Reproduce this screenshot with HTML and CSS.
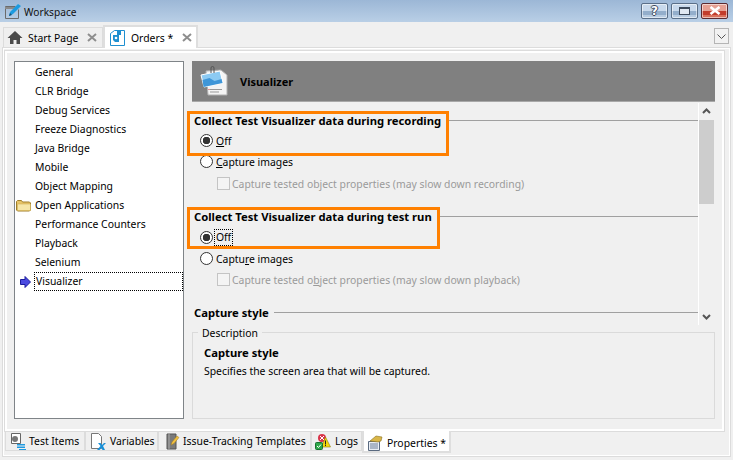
FILE: index.html
```html
<!DOCTYPE html>
<html lang="en">
<head>
<meta charset="utf-8">
<title>Workspace</title>
<link rel="stylesheet" href="styles.css">
</head>
<body>
<div class="window">
  <header class="titlebar">
    <svg class="title-icon" width="17" height="17" viewBox="0 0 17 17"><path d="M1.500 3.500h10M1.500 3.500v12h13v-9" fill="none" stroke="#6b6b6b"/><path d="M1 4h11v2H1z" fill="#8a8a8a"/><path d="M5 13l1-4 8-8 3 2-8 8z" fill="#1c9be0"/><path d="M5 13l1-3 2 2z" fill="#13507a"/></svg>
    <span class="title-text">Workspace</span>
    <div class="win-buttons">
      <div class="win-btn"><span class="help-mark">?</span></div>
      <div class="win-btn"><span class="max-mark"></span></div>
      <div class="win-btn close"><svg width="12" height="9" viewBox="0 0 12 9"><path d="M1.500 1l9 7M10.500 1l-9 7" stroke="#fff" stroke-width="2.600" fill="none"/></svg></div>
    </div>
  </header>

  <nav class="tabstrip">
    <div class="tab">
      <svg width="16" height="15" viewBox="0 0 16 15"><path d="M8 1L0.500 8H3v6h3.500v-4h3v4H13V8h2.500z" fill="#4b4b4b"/></svg>
      <span class="tab-label">Start Page</span>
      <svg class="tab-x" width="10" height="9" viewBox="0 0 10 9"><path d="M1 1l8 7M9 1l-8 7" stroke="#8e8e8e" stroke-width="2" fill="none"/></svg>
    </div>
    <div class="tab active">
      <svg width="15" height="16" viewBox="0 0 15 16"><path d="M4.500.5h10v15h-14v-12z" fill="#fff" stroke="#1e8fd0"/><path d="M3 5h6v7H5l-2-2z" fill="#1e8fd0"/><path d="M7 1h4v4H7z" fill="#1e8fd0"/><circle cx="6" cy="8" r="1.300" fill="#fff"/></svg>
      <span class="tab-label">Orders *</span>
      <svg class="tab-x" width="10" height="9" viewBox="0 0 10 9"><path d="M1 1l8 7M9 1l-8 7" stroke="#8e8e8e" stroke-width="2" fill="none"/></svg>
    </div>
    <div class="tab-menu"><svg width="9" height="5" viewBox="0 0 9 5"><path d="M.5.500l4 4 4-4" stroke="#555" fill="none"/></svg></div>
  </nav>

  <div class="outer-frame">
    <div class="inner-frame">
      <aside class="tree">
        <div class="tree-row">General</div>
        <div class="tree-row">CLR Bridge</div>
        <div class="tree-row">Debug Services</div>
        <div class="tree-row">Freeze Diagnostics</div>
        <div class="tree-row">Java Bridge</div>
        <div class="tree-row">Mobile</div>
        <div class="tree-row">Object Mapping</div>
        <div class="tree-row">
          <svg class="tree-icon" width="16" height="13" viewBox="0 0 16 13"><path d="M.5 11V2.500l1-1h4l1 1.500h7l1 1v7l-1 1h-12z" fill="#e6c469" stroke="#a07f2c"/><path d="M1.500 5h13v6.500h-13z" fill="#f6e6a8" stroke="#c9a648" stroke-width=".5"/></svg>
          Open Applications
        </div>
        <div class="tree-row">Performance Counters</div>
        <div class="tree-row">Playback</div>
        <div class="tree-row">Selenium</div>
        <div class="tree-row selected">
          <svg class="tree-icon arrow" width="11" height="12" viewBox="0 0 11 12"><path d="M.5 3.500h4.500V.5L10.500 6 5 11.500V8.500H.5z" fill="#4a4ae0" stroke="#1c1c9c"/></svg>
          <span class="focus-box">Visualizer</span>
        </div>
      </aside>

      <main class="panel">
        <div class="panel-head">
          <svg width="30" height="32" viewBox="0 0 30 32"><path d="M7 6l15-1 6 5v20H9z" fill="#f4f4f4" stroke="#b0b0b0"/><path d="M2 10l19-4 3 12-19 4z" fill="#8ccaf2" stroke="#fff"/><path d="M3.500 15l7-2 5 3 7-2 1 4-19 4z" fill="#3f96d8"/><path d="M12 8V3a1.500 1.500 0 0 1 3 0v5" fill="none" stroke="#555"/><path d="M11 24.500h12M11 27h9" stroke="#999"/><path d="M9.500 24h1v1h-1z" fill="#d33"/></svg>
          <span class="panel-title">Visualizer</span>
        </div>

        <div class="scroll-wrap">
          <div class="scroll-content">
            <div class="section-head first"><b>Collect Test Visualizer data during recording</b><i class="rule"></i></div>
            <div class="opt"><span class="radio on"></span><span class="opt-text"><u>O</u>ff</span></div>
            <div class="opt"><span class="radio"></span><span class="opt-text"><u>C</u>apture images</span></div>
            <div class="opt sub"><span class="check"></span><span class="opt-text dim">Capture tested object properties (may slow down recording)</span></div>

            <div class="section-head second"><b>Collect Test Visualizer data during test run</b><i class="rule"></i></div>
            <div class="opt"><span class="radio on"></span><span class="opt-text dotted">Off</span></div>
            <div class="opt"><span class="radio"></span><span class="opt-text">Captu<u>r</u>e images</span></div>
            <div class="opt sub"><span class="check"></span><span class="opt-text dim">Capture tested o<u>b</u>ject properties (may slow down playback)</span></div>

            <div class="section-head third"><b>Capture style</b><i class="rule"></i></div>
          </div>
          <div class="scrollbar">
            <svg width="9" height="6" viewBox="0 0 9 6"><path d="M1 5l3.500-3.500L8 5" stroke="#555" stroke-width="2" fill="none"/></svg>
            <div class="track"><div class="thumb"></div></div>
            <svg width="9" height="6" viewBox="0 0 9 6"><path d="M1 1l3.500 3.500L8 1" stroke="#555" stroke-width="2" fill="none"/></svg>
          </div>
        </div>

        <section class="desc">
          <span class="desc-legend">Description</span>
          <h3 class="desc-title">Capture style</h3>
          <p class="desc-text">Specifies the screen area that will be captured.</p>
        </section>
      </main>
    </div>

    <div class="bottom-tabs">
      <div class="btab">
        <svg width="17" height="17" viewBox="0 0 17 17"><path d="M2.500.5h9v10h-9z" fill="#fff" stroke="#666"/><circle cx="6" cy="6" r="3" fill="#777"/><path d="M8 11h8v1.500H8zM8 13.500h8V15H8zM10 16h7v1h-7z" fill="#1f9ae0"/></svg>
        <span>Test Items</span>
      </div>
      <div class="btab">
        <svg width="16" height="17" viewBox="0 0 16 17"><path d="M1.500.5h7l3 3v12h-10z" fill="#fff" stroke="#777"/><path d="M8 10h2.500l1.500 2 2-2H16l-3 3 2 4h-2.500L11.500 15l-2 2H7l3.500-4z" fill="#1890d8"/></svg>
        <span>Variables</span>
      </div>
      <div class="btab">
        <svg width="14" height="17" viewBox="0 0 14 17"><path d="M1 1h9v15H1z" fill="#7a7a7a" stroke="#555"/><path d="M3 1v15" stroke="#aaa"/><path d="M5 12l1-3 5-6 2 1.500-5 6z" fill="#f0c040" stroke="#a07a20" stroke-width=".5"/></svg>
        <span>Issue-Tracking Templates</span>
      </div>
      <div class="btab">
        <svg width="16" height="17" viewBox="0 0 16 17"><circle cx="7" cy="5" r="4" fill="#d8344a"/><path d="M5 3l4 4M9 3L5 7" stroke="#fff"/><path d="M10.500 4l5 10h-9z" fill="#f5d80a" stroke="#8a7a10" stroke-width=".6"/><path d="M10 7.500h1v4h-1zM10 12h1v1h-1z" fill="#222"/><rect x="0.500" y="9.500" width="7" height="7" rx="1" fill="#2fa84a" stroke="#1a7030"/><path d="M2 13l1.500 1.500L6 11.500" stroke="#fff" fill="none"/></svg>
        <span>Logs</span>
      </div>
      <div class="btab active">
        <svg width="16" height="16" viewBox="0 0 16 16"><path d="M1.500 6.500h11v9h-11z" fill="#e9eef5" stroke="#5a6a80"/><path d="M3 9h8M3 11h8M3 13h8" stroke="#6a7c98"/><path d="M3 6l6-5 6 1-1 4-3 1z" fill="#d9b648" stroke="#8a7020" stroke-width=".6"/></svg>
        <span>Properties *</span>
      </div>
    </div>
  </div>

  <div class="mark mark-one"></div>
  <div class="mark mark-two"></div>
</div>
</body>
</html>
```

FILE: styles.css
```css
* { box-sizing: border-box; }
html, body { margin: 0; padding: 0; }
body {
  width: 733px;
  height: 460px;
  overflow: hidden;
  background: #f0f0f0;
  font-family: "Noto Sans", "Liberation Sans", sans-serif;
  font-size: 10.4px;
  color: #000;
}
.window { position: relative; width: 733px; height: 460px; display: flex; flex-direction: column; }

.titlebar {
  height: 22px;
  display: flex;
  align-items: center;
  padding: 0 5px 0 4px;
  background: linear-gradient(#9cb7d6, #b9cfe6);
}
.title-icon { margin-right: 3px; }
.title-text { font-size: 10.2px; color: #111; padding-top: 2px; }
.win-buttons { margin-left: auto; margin-top: -1px; display: flex; gap: 3px; }
.win-btn {
  width: 27px;
  height: 16px;
  border: 1px solid #5a6f88;
  border-radius: 2px;
  background: linear-gradient(#c8d9ec 0 50%, #93aecb 50% 80%, #b7cce2 80%);
  display: flex;
  align-items: center;
  justify-content: center;
  box-shadow: inset 0 0 0 1px rgba(255,255,255,.55);
}
.win-btn.close { background: linear-gradient(#e6a093 0 50%, #c23c2c 50% 80%, #d9705c 80%); border-color: #5c2a30; }
.help-mark {
  font: bold 12px/1 "DejaVu Sans", sans-serif;
  color: #fff;
  text-shadow: 1px 0 #3c4a5c, -1px 0 #3c4a5c, 0 1px #3c4a5c, 0 -1px #3c4a5c;
}
.max-mark { width: 11px; height: 8px; border: 1px solid #3c4a5c; border-top-width: 2px; background: #dfe8f2; }

.tabstrip { height: 25px; display: flex; align-items: flex-start; padding: 3px 0 0 3px; position: relative; z-index: 1; }
.tab {
  width: 100px;
  height: 20px;
  margin-top: 2px;
  display: flex;
  align-items: center;
  gap: 5px;
  padding: 0 5px 0 3px;
  background: #efefef;
  border: 1px solid #dcdcdc;
  border-bottom: 0;
  white-space: nowrap;
}
.tab.active {
  width: 95px;
  height: 23px;
  margin-top: 0;
  gap: 6px;
  padding: 0 4px 0 5px;
  background: #fff;
  border-width: 2px 2px 0;
  border-color: #dedede;
}
.tab-x { margin-left: auto; flex: none; }
.tab-menu {
  margin: 3px 4px 0 auto;
  width: 15px;
  height: 16px;
  border: 1px solid #b5b5b5;
  display: flex;
  align-items: center;
  justify-content: center;
  background: #f2f2f2;
}

.outer-frame {
  flex: 1;
  margin: 0 2px 3px;
  border: 1px solid #dcdcdc;
  box-shadow: inset 0 0 0 1px #fff;
  padding: 2px 5px 0 1px;
  display: flex;
  flex-direction: column;
}
.inner-frame {
  height: 382px;
  flex: none;
  border: 1px solid #dcdcdc;
  box-shadow: inset 0 0 0 2px #fff;
  padding: 10px 9px 12px 9px;
  display: flex;
  gap: 8px;
}

.tree {
  width: 170px;
  border: 1px solid #7f8488;
  background: #fff;
  padding-top: 1px;
  flex: none;
}
.tree-row {
  position: relative;
  height: 19px;
  line-height: 18px;
  padding-left: 20px;
  white-space: nowrap;
}
.tree-icon { position: absolute; left: 1px; top: 3px; }
.tree-icon.arrow { left: 5px; top: 4px; }
.focus-box {
  display: block;
  margin: 0 0 0 -1px;
  padding-left: 1px;
  height: 19px;
  border: 1px dotted #000;
  line-height: 17px;
}

.panel { flex: 1; display: flex; flex-direction: column; min-width: 0; }
.panel-head {
  height: 41px;
  flex: none;
  background: #808080;
  display: flex;
  align-items: center;
  gap: 11px;
  padding-left: 7px;
  border-bottom: 1px solid #a8a8a8;
}
.panel-title { font-weight: 700; font-size: 11px; color: #000; }

.scroll-wrap { height: 222px; flex: none; display: flex; overflow: hidden; margin-top: 1px; }
.scroll-content { flex: 1; min-width: 0; padding: 8px 0 0 2px; }
.section-head { display: flex; align-items: center; gap: 5px; height: 18px; margin-bottom: 1px; font-size: 11.25px; white-space: nowrap; }
.section-head b { font-weight: 700; }
.rule { flex: 1; height: 1px; background: #a0a0a0; }
.section-head.second { margin-top: 12px; margin-bottom: 2px; }
.section-head.third { margin-top: 12px; }
.opt { display: flex; align-items: center; gap: 3px; height: 21px; padding-left: 6px; white-space: nowrap; }
.opt.sub { padding-left: 23px; height: 23px; gap: 2px; }
.section-head.second ~ .opt.sub { margin-top: -1px; }
.radio {
  width: 13px;
  height: 13px;
  border: 1px solid #333;
  border-radius: 50%;
  background: #fff;
  display: block;
}
.radio.on { background: radial-gradient(circle, #333 0 3.500px, #fff 4px); }
.check { width: 13px; height: 13px; border: 1px solid #c4c4c4; background: #f4f4f4; display: block; }
.dim { color: #9a9a9a; }
.dotted { outline: 1px dotted #000; line-height: 15px; padding: 0 1px; margin-left: -1px; }

.scrollbar {
  width: 17px;
  flex: none;
  border-left: 1px solid #fff;
  display: flex;
  flex-direction: column;
  align-items: center;
  padding: 5px 1px 5px 0;
}
.track { flex: 1; width: 15px; padding-top: 6px; }
.thumb { width: 15px; height: 84px; background: #cdcdcd; }

.desc {
  position: relative;
  margin-top: 7px;
  flex: 1;
  border: 1px solid #dadada;
  padding: 13px 11px 0;
}
.desc-legend {
  position: absolute;
  left: 5px;
  top: -7px;
  padding: 0 4px;
  background: #f0f0f0;
  line-height: 14px;
}
.desc-title { margin: 0; font-size: 11.25px; font-weight: 700; line-height: 14px; }
.desc-text { margin: 2px 0 0; line-height: 18px; }

.bottom-tabs {
  display: flex;
  align-items: flex-start;
  padding-left: 1px;
  margin-top: -1px;
  height: 24px;
  position: relative;
}
.btab {
  height: 19px;
  margin-top: 1px;
  display: flex;
  align-items: center;
  gap: 3px;
  padding-left: 3px;
  background: #efefef;
  border: 1px solid #dcdcdc;
  border-top: 0;
  white-space: nowrap;
}
.btab:nth-child(1) { width: 80px; }
.btab:nth-child(2) { width: 73px; padding-left: 4px; gap: 4px; }
.btab:nth-child(3) { width: 153px; padding-left: 7px; }
.btab:nth-child(4) { width: 51px; padding-left: 3px; gap: 4px; }
.btab.active {
  width: 89px;
  height: 22px;
  margin-top: 0;
  padding: 3px 0 0 3px;
  gap: 4px;
  background: #fff;
  border-width: 0 2px 2px;
  border-color: #dedede;
}

.mark { position: absolute; border: 3px solid #ff8000; pointer-events: none; }
.mark-one { left: 187px; top: 111px; width: 262px; height: 45px; }
.mark-two { left: 187px; top: 207px; width: 253px; height: 42px; }
```
